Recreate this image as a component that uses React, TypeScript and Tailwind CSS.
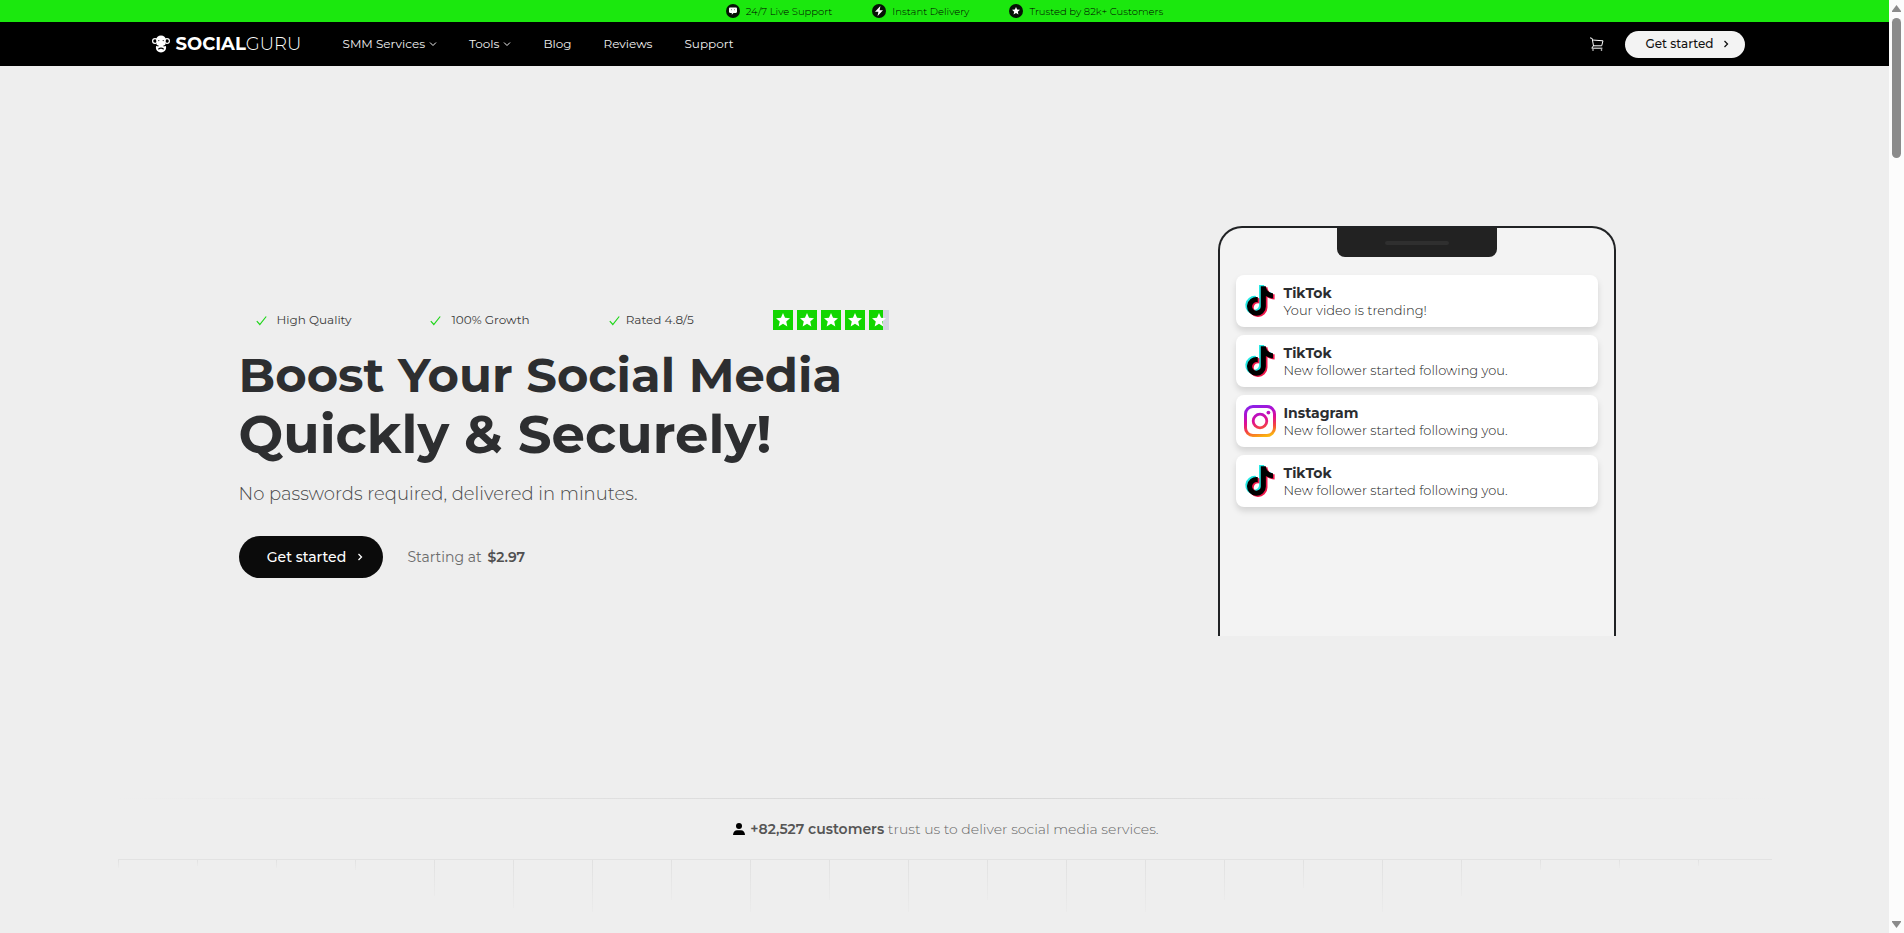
import React from "react";

const FONT = "font-['Montserrat','Inter',sans-serif]";

const TIKTOK =
  "M448,209.91a210.06,210.06,0,0,1-122.77-39.25V349.38A162.55,162.55,0,1,1,185,188.31V278.2a74.62,74.62,0,1,0,52.23,71.18V0l88,0a121.18,121.18,0,0,0,1.86,22.17h0A122.18,122.18,0,0,0,381,102.39a121.43,121.43,0,0,0,67,20.14Z";
const STAR =
  "M12 2l2.9 6.6 7.1.7-5.4 4.7 1.6 7L12 17.3 5.8 21l1.6-7L2 9.3l7.1-.7z";

function TikTokIcon() {
  return (
    <svg viewBox="-28 -20 504 552" className="h-8 w-8" aria-hidden="true">
      <path d={TIKTOK} fill="#25e8e4" transform="translate(-30 -19)" />
      <path d={TIKTOK} fill="#f0164a" transform="translate(28 19)" />
      <path d={TIKTOK} fill="#000" />
    </svg>
  );
}

function InstagramIcon() {
  return (
    <svg viewBox="0 0 32 32" className="h-8 w-8" aria-hidden="true">
      <defs>
        <linearGradient id="ig" gradientUnits="userSpaceOnUse" x1="10" y1="0" x2="18" y2="32">
          <stop offset="0" stopColor="#8a22e8" />
          <stop offset="0.25" stopColor="#b010d0" />
          <stop offset="0.5" stopColor="#e00f90" />
          <stop offset="0.75" stopColor="#f5483c" />
          <stop offset="1" stopColor="#fbb510" />
        </linearGradient>
      </defs>
      <rect x="1.5" y="1.5" width="29" height="29" rx="7.5" fill="none" stroke="url(#ig)" strokeWidth="3" />
      <circle cx="16" cy="16" r="6.8" fill="none" stroke="url(#ig)" strokeWidth="2.8" />
      <circle cx="24.4" cy="7.6" r="1.9" fill="url(#ig)" />
    </svg>
  );
}

function LogoMark() {
  return (
    <svg viewBox="0 0 18 18" className="h-[18px] w-[18px]" aria-hidden="true">
      <circle cx="3" cy="6" r="2.4" fill="none" stroke="#fff" strokeWidth="1.2" />
      <circle cx="15" cy="6" r="2.4" fill="none" stroke="#fff" strokeWidth="1.2" />
      <path
        fill="#fff"
        d="M9 0.5c2.8 0 4.8 1.7 4.8 4.3 0 1.6-.4 2.7-.6 3.9-.1 1 .9 2.200.9 3.900 0 2.900-2.100 4.900-5.100 4.900s-5.100-2-5.100-4.900c0-1.700 1-2.900.9-3.900-.2-1.200-.6-2.300-.6-3.900C4.200 2.200 6.200.5 9 .5z"
      />
      <circle cx="6.8" cy="5.6" r="0.6" fill="#000" />
      <circle cx="11.200" cy="5.6" r="0.6" fill="#000" />
      <path d="M3.600 10.200L6.500 11M14.400 10.200L11.500 11M6.300 14.200q2.700-2.200 5.400 0" stroke="#000" strokeWidth="1.100" fill="none" />
    </svg>
  );
}

function Disc({ children }: { children: React.ReactNode }) {
  return (
    <svg viewBox="0 0 14 14" className="h-3.5 w-3.5 shrink-0" aria-hidden="true">
      <circle cx="7" cy="7" r="7" fill="#061206" />
      {children}
    </svg>
  );
}

function Chevron({ right = false }: { right?: boolean }) {
  return (
    <svg viewBox="0 0 8 8" className="h-2 w-2 shrink-0" fill="none" stroke="currentColor" strokeWidth={right ? 1.3 : 1} aria-hidden="true">
      <path d={right ? "M2.500 1l3 3-3 3" : "M1 2.500l3 3 3-3"} />
    </svg>
  );
}

function Check() {
  return (
    <svg viewBox="0 0 11 11" className="h-[11px] w-[11px]" fill="none" stroke="#1fd61a" strokeWidth="1.200" aria-hidden="true">
      <path d="M0.800 6.200l3 3.300L10.200 1.500" />
    </svg>
  );
}

const NOTES = [
  { app: "TikTok", text: "Your video is trending!" },
  { app: "TikTok", text: "New follower started following you." },
  { app: "Instagram", text: "New follower started following you." },
  { app: "TikTok", text: "New follower started following you." },
];

const TICKS = [
  "h-2", "h-1.5", "h-2", "h-2.5", "h-9", "h-12", "h-13", "h-10", "h-13", "h-10", "h-13",
  "h-10", "h-13", "h-13", "h-10", "h-7", "h-13", "h-9", "h-2.5", "h-2", "h-1.5",
];

function TopBar() {
  return (
    <div className="flex h-[22px] items-center justify-center gap-10 bg-[#1be80e] text-[10px] font-light text-black">
      <div className="flex items-center gap-1.5">
        <Disc>
          <path fill="#fff" d="M4.200 3.500h5.600c.7 0 1.200.5 1.200 1.200v3c0 .7-.5 1.200-1.200 1.200H7.500L5.800 10.800V8.900H4.200C3.500 8.900 3 8.400 3 7.700v-3c0-.7.5-1.200 1.200-1.200z" />
          <path stroke="#061206" strokeWidth="0.500" d="M5.500 5.200v1M8.500 5.200v1" />
        </Disc>
        24/7 Live Support
      </div>
      <div className="flex items-center gap-1.5">
        <Disc>
          <path fill="#fff" d="M8.400 2L3 7.700h3.400L5.600 12 11 6.300H7.600z" />
        </Disc>
        Instant Delivery
      </div>
      <div className="flex items-center gap-1.5">
        <Disc>
          <path fill="#fff" d={STAR} transform="translate(2.200 2.100) scale(.4)" />
        </Disc>
        Trusted by 82k+ Customers
      </div>
    </div>
  );
}

function Header() {
  return (
    <header className="h-11 bg-black text-[#f1f1f1]">
      <div className="mx-auto flex h-full max-w-[1654px] items-center pr-[27px] pl-[34px]">
        <a href="#home" className="flex w-[191px] items-center gap-1.5 text-[18px] font-light text-white">
          <LogoMark />
          <span>
            <b className="font-bold">SOCIAL</b>GURU
          </span>
        </a>
        <nav className="flex items-center gap-8 text-[12px]">
          <a href="#services" className="flex items-center gap-1">
            SMM Services <Chevron />
          </a>
          <a href="#tools" className="flex items-center gap-1">
            Tools <Chevron />
          </a>
          <a href="#blog">Blog</a>
          <a href="#reviews">Reviews</a>
          <a href="#support">Support</a>
        </nav>
        <a href="#cart" aria-label="Cart" className="ml-auto">
          <svg viewBox="0 0 14 14" className="h-3.5 w-3.5" fill="none" stroke="#fff" strokeWidth="1" aria-hidden="true">
            <path d="M0 .8l2.200.7L3.500 9M2.600 3l10.400.8-1.300 5H3.400L1.800 11.200h10.600" />
            <circle cx="3" cy="13" r=".8" fill="#fff" stroke="none" />
            <circle cx="11.500" cy="13" r=".8" fill="#fff" stroke="none" />
          </svg>
        </a>
        <button className="ml-[21px] flex h-[27px] w-[120px] items-center justify-center gap-2 rounded-full bg-[#f3f3f3] pl-1.5 text-[12px] font-medium text-[#111]">
          Get started <Chevron right />
        </button>
      </div>
    </header>
  );
}

function Stars() {
  return (
    <div className="flex gap-1" role="img" aria-label="4.8 out of 5 stars">
      {[0, 1, 2, 3, 4].map((i) => (
        <svg key={i} viewBox="0 0 20 20" className="h-5 w-5" aria-hidden="true">
          <rect width="20" height="20" fill={i === 4 ? "#d3d5e0" : "#12d600"} />
          {i === 4 && <rect width="14" height="20" fill="#12d600" />}
          <path d={STAR} fill="#fff" transform="translate(1.600 1.700) scale(.7)" />
        </svg>
      ))}
    </div>
  );
}

function Phone() {
  return (
    <div className="flex h-[410px] w-[398px] shrink-0 flex-col rounded-t-[24px] border-2 border-b-0 border-[#202224] bg-[#f3f3f3] px-4">
      <div className="mx-auto flex h-[29px] w-40 justify-center rounded-b-lg bg-[#222]">
        <div className="mt-[13px] h-1 w-16 rounded-full bg-[#2f2f2f]" />
      </div>
      <ul className="mt-[18px] flex flex-col gap-2">
        {NOTES.map((n, i) => (
          <li key={i} className="flex h-[52px] items-center gap-2 rounded-lg bg-white px-2 shadow-[0_4px_6px_rgba(0,0,0,0.13)]">
            {n.app === "TikTok" ? <TikTokIcon /> : <InstagramIcon />}
            <div className="pt-0.5">
              <p className="text-[14px] leading-[17px] font-bold text-[#2b2d30]">{n.app}</p>
              <p className="text-[13px] leading-[17px] font-light text-[#222]">{n.text}</p>
            </div>
          </li>
        ))}
      </ul>
    </div>
  );
}

function Hero() {
  return (
    <section className="mx-auto flex min-h-[732px] max-w-[1654px] items-center justify-between pr-[156px] pb-0.5 pl-[121px]">
      <div className="pt-[26px]">
        <div className="flex items-center gap-[79px] pl-[17px] text-[12px] text-[#3c3c3c]">
          <span className="flex items-center gap-2.5"><Check /> High Quality</span>
          <span className="flex items-center gap-2.5"><Check /> 100% Growth</span>
          <span className="flex items-center gap-1.5"><Check /> Rated 4.8/5</span>
          <Stars />
        </div>
        <h1 className="mt-4 font-bold text-[#2d2e30]">
          <span className="block text-[48px] leading-[58px]">Boost Your Social Media</span>
          <span className="block text-[53px] leading-[60px]">Quickly &amp; Securely!</span>
        </h1>
        <p className="mt-4 text-[18px] leading-7 font-light text-[#484848]">No passwords required, delivered in minutes.</p>
        <div className="mt-7 flex items-center gap-[25px]">
          <button className="flex h-[42px] w-36 items-center justify-center gap-2.5 rounded-full bg-[#0b0b0b] pl-2.5 text-[14px] font-medium text-white">
            Get started <Chevron right />
          </button>
          <p className="text-[14px] text-[#6b6b6b]">
            Starting at <b className="ml-0.5 font-semibold text-[#505050]">$2.97</b>
          </p>
        </div>
      </div>
      <Phone />
    </section>
  );
}

function Trust() {
  return (
    <section className="mx-auto max-w-[1654px]">
      <div className="h-px bg-linear-to-r from-transparent via-[#d6d6d6] to-transparent" />
      <p className="flex h-[60px] items-center justify-center gap-[5px] pl-[3px] text-[14px] font-light text-[#666]">
        <svg viewBox="0 0 12 12" className="h-3 w-3" fill="#000" aria-hidden="true">
          <circle cx="6" cy="3" r="3" />
          <path d="M0 12c0-3 2-4.700 4-4.700h4c2 0 4 1.700 4 4.700z" />
        </svg>
        <span>
          <b className="font-semibold text-[#555]">+82,527 customers</b> trust us to deliver social media services.
        </span>
      </p>
      <div className="h-px bg-[#e2e2e2]" />
      <div className="grid grid-cols-[repeat(21,79px)] items-start overflow-hidden">
        {TICKS.map((h, i) => (
          <div key={i} className={`${h} w-px bg-linear-to-b from-[#e1e1e1] to-[#ebebeb]`} />
        ))}
      </div>
    </section>
  );
}

function ScrollRail() {
  return (
    <div className="flex w-[15px] shrink-0 flex-col items-center bg-[#fcfcfc] py-[5px]" aria-hidden="true">
      <svg viewBox="0 0 9 7" className="h-[7px] w-[9px]" fill="#8b8b8b">
        <path d="M4.500 0L9 6v1H0V6z" />
      </svg>
      <div className="mt-1.5 h-[140px] w-[9px] rounded-full bg-[#8b8b8b]" />
      <svg viewBox="0 0 9 7" className="mt-auto h-[7px] w-[9px]" fill="#8b8b8b">
        <path d="M4.500 7L9 1V0H0v1z" />
      </svg>
    </div>
  );
}

export default function App() {
  return (
    <div className={`${FONT} flex h-screen bg-[#eeeeee]`}>
      <main className="min-w-0 flex-1 overflow-hidden">
        <TopBar />
        <Header />
        <Hero />
        <Trust />
      </main>
      <ScrollRail />
    </div>
  );
}
